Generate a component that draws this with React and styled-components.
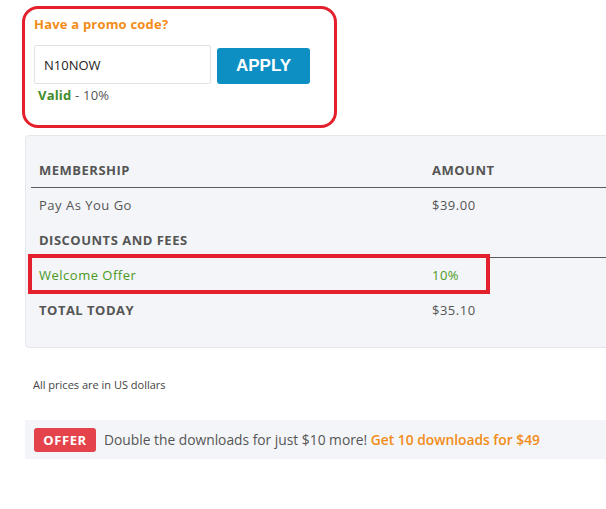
import React from "react";
import styled, { createGlobalStyle } from "styled-components";

const GlobalStyle = createGlobalStyle`
  html, body {
    margin: 0;
    padding: 0;
    background: #fff;
    overflow: hidden;
  }
  body {
    font-family: "Open Sans", "DejaVu Sans", sans-serif;
    color: #555;
  }
`;

const rows = [
  { label: "Pay As You Go", amount: "$39.00" },
  { label: "DISCOUNTS AND FEES", amount: "", head: true, line: true },
  { label: "Welcome Offer", amount: "10%", green: true, marked: true },
  { label: "TOTAL TODAY", amount: "$35.10", head: true },
];

function App() {
  return (
    <>
      <GlobalStyle />
      <Page>
        <PromoCard>
          <PromoTitle>Have a promo code?</PromoTitle>
          <PromoForm>
            <CodeInput type="text" defaultValue="N10NOW" />
            <ApplyButton>APPLY</ApplyButton>
          </PromoForm>
          <Status>
            <Valid>Valid</Valid> - 10%
          </Status>
        </PromoCard>

        <Summary>
          <Row line>
            <Cell head>MEMBERSHIP</Cell>
            <Cell head>AMOUNT</Cell>
          </Row>
          {rows.map((r) => (
            <Row key={r.label} line={r.line}>
              {r.marked && <Marker />}
              <Cell head={r.head} green={r.green}>
                {r.label}
              </Cell>
              <Cell green={r.green}>{r.amount}</Cell>
            </Row>
          ))}
        </Summary>

        <Note>All prices are in US dollars</Note>

        <OfferBar>
          <Badge>OFFER</Badge>
          <OfferText>
            Double the downloads for just $10 more!{" "}
            <OfferLink>Get 10 downloads for $49</OfferLink>
          </OfferText>
        </OfferBar>
      </Page>
    </>
  );
}

const Page = styled.div`
  display: flex;
  flex-direction: column;
  padding: 6px 0 0 22px;
  width: 660px;
`;

const PromoCard = styled.div`
  display: flex;
  flex-direction: column;
  box-sizing: border-box;
  width: 315px;
  height: 122px;
  padding: 6px 0 0 9px;
  border: 3px solid #e3202b;
  border-radius: 16px;
`;

const PromoTitle = styled.div`
  font-size: 13px;
  font-weight: 700;
  line-height: 18px;
  letter-spacing: 0.2px;
  color: #f28c18;
`;

const PromoForm = styled.div`
  display: flex;
  align-items: flex-start;
  gap: 6px;
  margin-top: 12px;
`;

const CodeInput = styled.input`
  box-sizing: border-box;
  width: 177px;
  height: 39px;
  padding: 0 9px;
  border: 1px solid #e2e2e2;
  border-radius: 2px;
  font-family: "Open Sans", sans-serif;
  font-size: 13px;
  color: #222;
  outline: none;
`;

const ApplyButton = styled.button`
  width: 93px;
  height: 36px;
  margin-top: 3px;
  border: none;
  border-radius: 3px;
  background: #0e8fc3;
  color: #fff;
  font-family: "Liberation Sans", Arial, sans-serif;
  font-size: 17px;
  font-weight: 700;
  cursor: pointer;
`;

const Status = styled.div`
  margin: 2px 0 0 4px;
  font-size: 13px;
  line-height: 18px;
  letter-spacing: 0.2px;
  color: #555;
`;

const Valid = styled.span`
  font-weight: 700;
  color: #3f8d2c;
`;

const Summary = styled.div`
  display: flex;
  flex-direction: column;
  box-sizing: border-box;
  margin: 7px 0 0 3px;
  padding: 17px 0 19px 5px;
  background: #f4f5f8;
  border: 1px solid #e6e7ea;
  border-radius: 4px;
`;

const Row = styled.div`
  position: relative;
  display: grid;
  grid-template-columns: 393px 1fr;
  box-sizing: border-box;
  height: 35px;
  align-items: center;
  border-bottom: 1px solid ${(p) => (p.line ? "#5a5a5a" : "transparent")};
`;

const Cell = styled.div`
  padding-left: 8px;
  font-size: 13px;
  font-weight: ${(p) => (p.head ? 700 : 400)};
  letter-spacing: 0.5px;
  color: ${(p) => (p.green ? "#4a9a22" : "#555")};
`;

const Marker = styled.span`
  position: absolute;
  left: -3px;
  top: -4px;
  width: 462px;
  height: 40px;
  box-sizing: border-box;
  border: 4px solid #e3202b;
  pointer-events: none;
`;

const Note = styled.div`
  margin: 29px 0 0 11px;
  font-size: 11px;
  color: #444;
`;

const OfferBar = styled.div`
  display: flex;
  align-items: center;
  gap: 8px;
  height: 39px;
  margin: 28px 0 0 3px;
  padding-left: 9px;
  background: #f4f5f8;
`;

const Badge = styled.span`
  display: flex;
  align-items: center;
  justify-content: center;
  width: 62px;
  height: 24px;
  border-radius: 3px;
  background: #e5434b;
  color: #fff;
  font-size: 13px;
  font-weight: 700;
  letter-spacing: 0.6px;
`;

const OfferText = styled.span`
  font-size: 13.8px;
  color: #555;
`;

const OfferLink = styled.span`
  font-weight: 600;
  color: #f28c18;
`;

export default App;
